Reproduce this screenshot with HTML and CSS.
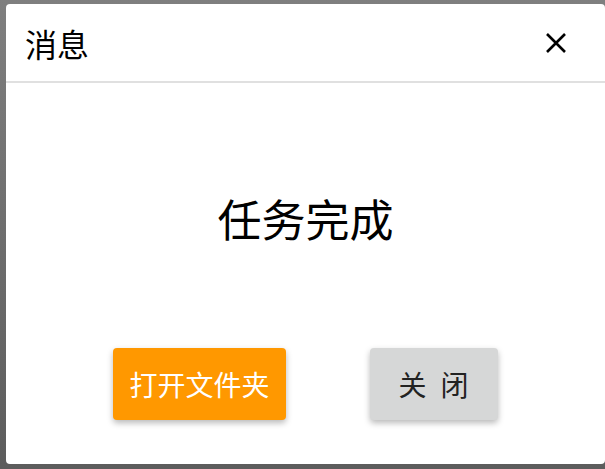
FILE: index.html
```html
<!DOCTYPE html>
<html lang="zh-CN">
<head>
  <meta charset="UTF-8" />
  <meta name="viewport" content="width=device-width, initial-scale=1.0"/>
  <title>消息</title>
  <link rel="stylesheet" href="styles.css">
</head>
<body>

  <div class="dialog">
    <!-- 标题栏 -->
    <div class="dialog-header">
      <span class="dialog-title">消息</span>
      <button type="button" class="close-btn" aria-label="关闭">
        <svg width="20" height="20" viewBox="0 0 20 20">
          <path d="M1 1 L19 19 M19 1 L1 19" stroke="#000" stroke-width="2.6" fill="none" />
        </svg>
      </button>
    </div>

    <div class="dialog-body">
      <p class="message">任务完成</p>

      <div class="actions">
        <button type="button" class="btn btn-primary">打开文件夹</button>
        <button type="button" class="btn btn-default">关&ensp;闭</button>
      </div>
    </div>
  </div>

</body>
</html>
```

FILE: styles.css
```css
:root {
  --orange: #ff9800;
  --grey-btn: #d6d7d7;
  --line: #e0e0e0;
  --shadow: rgba(0, 0, 0, 0.28);
}

* {
  box-sizing: border-box;
}

html, body {
  height: 100%;
}

body {
  margin: 0;
  padding: 4px 0 5px 6px;
  font-family: "Noto Sans CJK SC", "Noto Sans", sans-serif;
  background: linear-gradient(180deg, #7f7f7f, #5c5c5c);
  color: #000;
  overflow: hidden;
}

.dialog {
  background: #fff;
  height: 460px;
  border-radius: 4px;
  display: flex;
  flex-direction: column;
}

.dialog-header {
  height: 79px;
  display: flex;
  align-items: center;
  justify-content: space-between;
  padding: 0 29px 0 19px;
  border-bottom: 2px solid var(--line);
}

.dialog-title {
  font-size: 32px;
  line-height: 1;
}

.close-btn {
  width: 40px;
  height: 40px;
  border: none;
  background: none;
  padding: 0;
  display: flex;
  align-items: center;
  justify-content: center;
  cursor: pointer;
}

.dialog-body {
  flex: 1;
  display: flex;
  flex-direction: column;
  align-items: center;
}

.message {
  margin: 102px 0 0;
  font-size: 44px;
  line-height: 66px;
}

.actions {
  margin-top: 97px;
  display: flex;
  justify-content: center;
  gap: 84px;
}

.btn {
  height: 72px;
  border: none;
  border-radius: 4px;
  font-family: inherit;
  font-size: 28px;
  box-shadow: 0 3px 6px var(--shadow);
  cursor: pointer;
}

.btn-primary {
  background: var(--orange);
  color: #fff;
  padding: 0 16px;
}

.btn-default {
  background: var(--grey-btn);
  color: #222;
  width: 128px;
  padding: 0;
}
```
